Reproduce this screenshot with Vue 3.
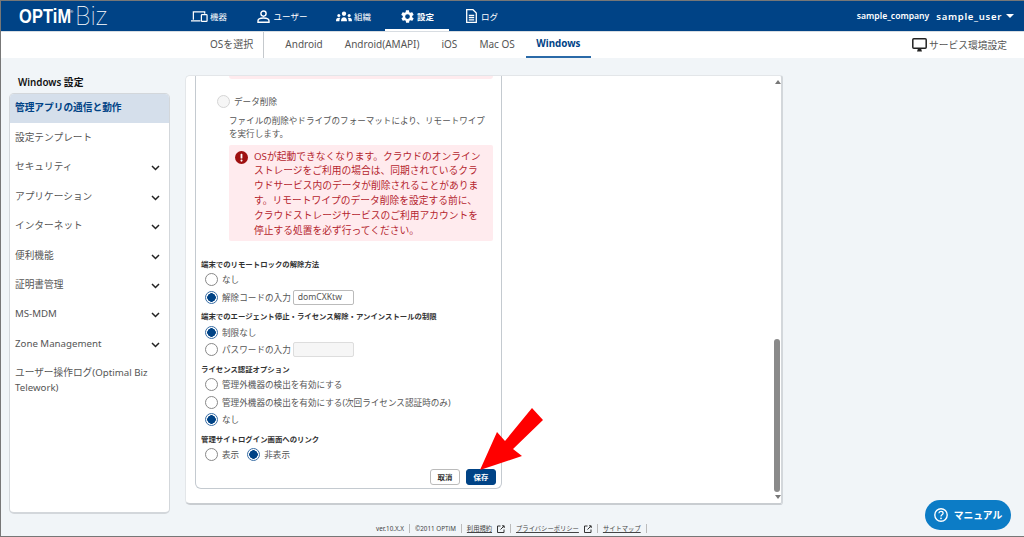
<script setup>
const menus = [
  { label: '設定テンプレート', more: false },
  { label: 'セキュリティ', more: true },
  { label: 'アプリケーション', more: true },
  { label: 'インターネット', more: true },
  { label: '便利機能', more: true },
  { label: '証明書管理', more: true },
  { label: 'MS-MDM', more: true },
  { label: 'Zone Management', more: true }
]
const tabs = ['Android', 'Android(AMAPI)', 'iOS', 'Mac OS', 'Windows']
</script>

<template>
  <div class="page">
    <header class="topbar">
      <div class="logo"><span class="optim">OPTiM</span><sup>®</sup><span class="biz">Biz</span></div>
      <nav class="mainnav">
        <a class="navitem">
          <svg width="17" height="13" viewBox="0 0 18 13" fill="none" stroke="#fff" stroke-width="1.3"><path d="M2.5 10V1.5h12v2M0 11.2h10"/><rect x="11" y="4.5" width="6" height="7.2" rx=".8"/></svg>
          <span>機器</span>
        </a>
        <a class="navitem wide">
          <svg width="13" height="13" viewBox="0 0 13 13" fill="none" stroke="#fff" stroke-width="1.4"><circle cx="6.5" cy="3.6" r="2.6"/><path d="M1 12.2v-1.4C1 9 3 8 6.5 8s5.500 1 5.500 2.800v1.400z"/></svg>
          <span>ユーザー</span>
        </a>
        <a class="navitem">
          <svg width="16" height="11" viewBox="0 0 17 11" fill="#fff"><circle cx="8.500" cy="2.600" r="2.300"/><circle cx="3" cy="4.500" r="1.600"/><circle cx="14" cy="4.500" r="1.600"/><path d="M5.300 10.500c0-3 1.300-4.300 3.200-4.300s3.200 1.300 3.200 4.300zM0 10.500c0-2.500 1-3.600 3-3.600.6 0 1 .1 1.400.3-.5.800-.8 1.900-.8 3.300zM17 10.500c0-2.500-1-3.600-3-3.600-.6 0-1 .1-1.400.3.500.8.800 1.900.8 3.300z"/></svg>
          <span>組織</span>
        </a>
        <a class="navitem active">
          <svg width="15" height="15" viewBox="0 0 24 24" fill="#fff"><path d="M19.400 13c.1-.3.100-.7.100-1s0-.7-.1-1l2.100-1.600c.2-.2.300-.4.100-.6l-2-3.500c-.1-.2-.4-.3-.6-.2l-2.500 1c-.5-.4-1.100-.7-1.700-1l-.4-2.600c0-.3-.2-.4-.5-.4h-4c-.3 0-.5.100-.5.400l-.4 2.600c-.6.300-1.200.6-1.700 1l-2.500-1c-.2-.1-.5 0-.6.200l-2 3.500c-.1.200-.1.400.1.600L4.600 11c-.1.300-.1.700-.1 1s0 .7.100 1l-2.100 1.600c-.2.200-.3.400-.1.600l2 3.500c.1.200.4.300.6.200l2.500-1c.5.400 1.100.7 1.700 1l.4 2.600c0 .3.200.4.500.4h4c.3 0 .5-.1.500-.4l.4-2.600c.6-.3 1.200-.6 1.700-1l2.500 1c.2.100.5 0 .6-.2l2-3.500c.1-.2.100-.4-.1-.6zM12 15.800a3.800 3.800 0 1 1 0-7.600 3.800 3.800 0 0 1 0 7.600z"/></svg>
          <span>設定</span>
        </a>
        <a class="navitem wide">
          <svg width="11" height="14" viewBox="0 0 11 14" fill="none" stroke="#fff" stroke-width="1.300"><path d="M.7.700h6.300l3.300 3.300v9.300H.7z"/><path d="M2.800 6.500h5.400M2.800 8.700h5.400M2.800 10.900h5.400"/></svg>
          <span>ログ</span>
        </a>
      </nav>
      <div class="account">
        <span class="company">sample_company</span>
        <span class="user">sample_user</span>
        <i class="caret"></i>
      </div>
    </header>

    <div class="subbar">
      <div class="oslabel">OSを選択</div>
      <div class="ostabs">
        <a v-for="t in tabs" :key="t" class="ostab" :class="{ on: t === 'Windows' }">{{ t }}</a>
      </div>
      <div class="service">
        <svg width="15" height="14" viewBox="0 0 15 14" fill="none"><rect x=".8" y=".8" width="13.400" height="9.400" rx="1" stroke="#222" stroke-width="1.500"/><path d="M5 13.500h5L9 10.500H6z" fill="#222"/></svg>
        サービス環境設定
      </div>
    </div>

    <div class="content">
      <aside class="side">
        <div class="sidetitle">Windows 設定</div>
        <div class="sidecard">
          <div class="sideitem current">管理アプリの通信と動作</div>
          <div v-for="m in menus" :key="m.label" class="sideitem">
            {{ m.label }}
            <svg v-if="m.more" class="chev" width="9" height="6" viewBox="0 0 9 6" fill="none" stroke="#222" stroke-width="1.500"><path d="M1 1l3.500 3.500L8 1"/></svg>
          </div>
          <div class="sideitem long">ユーザー操作ログ(Optimal Biz Telework)</div>
        </div>
      </aside>

      <main class="panel">
        <section class="box">
          <div class="pinktail"></div>
          <label class="radio wipe"><i class="dot off"></i>データ削除</label>
          <p class="desc">ファイルの削除やドライブのフォーマットにより、リモートワイプを実行します。</p>
          <div class="alert">
            <svg class="alerticon" width="13" height="13" viewBox="0 0 13 13"><circle cx="6.500" cy="6.500" r="6.500" fill="#9e1010"/><rect x="5.600" y="2.800" width="1.800" height="4.800" rx=".6" fill="#fff"/><circle cx="6.500" cy="9.600" r="1.050" fill="#fff"/></svg>
            <div>OSが起動できなくなります。クラウドのオンラインストレージをご利用の場合は、同期されているクラウドサービス内のデータが削除されることがあります。リモートワイプのデータ削除を設定する前に、クラウドストレージサービスのご利用アカウントを停止する処置を必ず行ってください。</div>
          </div>

          <h4 class="head first">端末でのリモートロックの解除方法</h4>
          <label class="radio"><i class="dot"></i>なし</label>
          <label class="radio"><i class="dot sel"></i>解除コードの入力<input class="code" value="domCXKtw" /></label>

          <h4 class="head">端末でのエージェント停止・ライセンス解除・アンインストールの制限</h4>
          <label class="radio"><i class="dot sel"></i>制限なし</label>
          <label class="radio"><i class="dot"></i>パスワードの入力<input class="code empty" /></label>

          <h4 class="head">ライセンス認証オプション</h4>
          <label class="radio"><i class="dot"></i>管理外機器の検出を有効にする</label>
          <label class="radio"><i class="dot"></i>管理外機器の検出を有効にする(次回ライセンス認証時のみ)</label>
          <label class="radio"><i class="dot sel"></i>なし</label>

          <h4 class="head">管理サイトログイン画面へのリンク</h4>
          <div class="inline">
            <label class="radio"><i class="dot"></i>表示</label>
            <label class="radio"><i class="dot sel"></i>非表示</label>
          </div>

          <div class="actions">
            <button class="btn">取消</button>
            <button class="btn primary">保存</button>
          </div>
        </section>

        <div class="scroll">
          <i class="up"></i>
          <i class="thumb"></i>
          <i class="down"></i>
        </div>
      </main>
    </div>

    <footer class="foot">
      <span>ver.10.X.X</span>
      <span>©2011 OPTiM</span>
      <span><u>利用規約</u><svg class="ext" width="8" height="8" viewBox="0 0 8 8" fill="none" stroke="#333"><path d="M3.500 1H.5v6.500H7V4.500M3.500 4.500L7 1M5 .8h2.200V3"/></svg></span>
      <span><u>プライバシーポリシー</u><svg class="ext" width="8" height="8" viewBox="0 0 8 8" fill="none" stroke="#333"><path d="M3.500 1H.5v6.500H7V4.500M3.500 4.500L7 1M5 .8h2.200V3"/></svg></span>
      <span><u>サイトマップ</u></span>
    </footer>

    <a class="manual">
      <svg width="14" height="14" viewBox="0 0 14 14" fill="none"><circle cx="7" cy="7" r="6.200" stroke="#fff" stroke-width="1.400"/><path d="M4.900 5.300C5 4 5.900 3.400 7 3.400c1.200 0 2.100.7 2.100 1.800 0 1.600-2.100 1.500-2.100 3.200" stroke="#fff" stroke-width="1.300"/><circle cx="7" cy="10.300" r=".9" fill="#fff"/></svg>
      マニュアル
    </a>

    <svg class="arrow" width="70" height="70" viewBox="475 405 70 70"><polygon points="480,470 497,432 505,441 532,408 543,420 513,449 522,456" fill="#ff0000"/></svg>
  </div>
</template>

<style>
html, body { margin: 0; padding: 0; }
</style>

<style scoped>
.page {
  position: relative;
  box-sizing: border-box;
  width: 1024px;
  height: 537px;
  overflow: hidden;
  display: flex;
  flex-direction: column;
  background: #f1f5f8;
  border: 1px solid #777;
  border-right: 0;
  font-family: "Noto Sans", "Noto Sans CJK JP", sans-serif;
  color: #555;
}
.topbar {
  flex: 0 0 30px;
  display: flex;
  align-items: center;
  background: #004386;
  color: #fff;
}
.logo {
  width: 175px;
  padding-left: 18px;
  box-sizing: border-box;
  display: flex;
  align-items: center;
  white-space: nowrap;
}
.optim {
  width: 50px;
  font-family: "Liberation Sans", sans-serif;
  font-weight: 700;
  font-size: 21px;
  letter-spacing: .2px;
  transform: scaleX(.78);
  transform-origin: left center;
}
sup { font-size: 4px; margin: -10px 0 0 1px; }
.biz {
  font-family: Roboto, sans-serif;
  font-weight: 100;
  font-size: 25px;
  margin-left: 2px;
}
.mainnav {
  display: grid;
  grid-template-columns: 66px 80px 63px 64px 66px;
  height: 100%;
}
.navitem {
  display: flex;
  align-items: center;
  justify-content: center;
  gap: 2px;
  font-size: 8.500px;
  position: relative;
}
.navitem.wide { gap: 4px; }
.navitem.active { font-weight: 700; }
.navitem.active::after {
  content: "";
  position: absolute;
  left: 0;
  right: 0;
  bottom: 0;
  height: 2px;
  background: #fff;
}
.account {
  margin-left: auto;
  margin-right: 10px;
  display: flex;
  align-items: center;
  font-weight: 600;
}
.company { font-size: 8.600px; margin-right: 7px; }
.user { font-size: 9.500px; letter-spacing: .7px; }
.caret {
  margin-left: 4px;
  border: 4px solid transparent;
  border-top: 4px solid #fff;
  border-bottom: 0;
}
.subbar {
  flex: 0 0 26px;
  display: flex;
  align-items: stretch;
  background: #fff;
  border-top: 1px solid #d8dde2;
  box-sizing: border-box;
  font-size: 10px;
}
.oslabel {
  margin-left: 209px;
  padding-right: 10px;
  border-right: 1px solid #c5c9cd;
  line-height: 24px;
}
.ostabs { display: flex; margin-left: 10px; }
.ostab {
  padding: 0 11px;
  line-height: 24px;
  border-bottom: 2px solid transparent;
}
.ostab.on {
  color: #004386;
  font-weight: 700;
  font-size: 9.800px;
  padding: 0 10.500px;
  border-bottom-color: #2a6aa8;
}
.service {
  margin-left: auto;
  margin-right: 17px;
  display: flex;
  align-items: center;
  gap: 2px;
  font-size: 9.750px;
}
.content {
  flex: 0 0 459px;
  display: flex;
  align-items: flex-start;
}
.side { width: 161px; margin-left: 8px; }
.sidetitle {
  margin: 18px 0 3px 9px;
  height: 14px;
  font-size: 9.800px;
  line-height: 14px;
  font-weight: 600;
  color: #111;
}
.sidecard {
  box-sizing: border-box;
  height: 421px;
  background: #fff;
  border: 1px solid #d3d7db;
  border-bottom-width: 2px;
  border-radius: 5px;
  overflow: hidden;
}
.sideitem {
  position: relative;
  height: 29.400px;
  line-height: 29.400px;
  padding-left: 5px;
  font-size: 9.700px;
}
.sideitem.current {
  height: 29px;
  line-height: 27px;
  background: #d5dfeb;
  color: #004386;
  font-weight: 700;
}
.sideitem.long {
  height: auto;
  line-height: 15px;
  padding: 7px 10px 0 5px;
}
.chev { position: absolute; right: 9px; top: 13px; }
.panel {
  position: relative;
  box-sizing: border-box;
  width: 598px;
  height: 430px;
  margin: 17px 0 0 15px;
  padding-left: 9px;
  background: #fff;
  border: 1px solid #e3e6e9;
  border-right: 2px solid #d3d7db;
  border-bottom: 2px solid #c9cdd1;
  border-radius: 5px 3px 3px 5px;
  overflow: hidden;
}
.box {
  box-sizing: border-box;
  width: 307px;
  height: 413px;
  padding-left: 5px;
  border: 1px solid #c4cad0;
  border-top: 0;
  border-radius: 0 0 6px 6px;
}
.pinktail {
  height: 3px;
  margin: 0 8px 0 28px;
  background: #ffebee;
  border-radius: 0 0 3px 3px;
}
.radio {
  display: flex;
  align-items: center;
  height: 17.500px;
  font-size: 8.600px;
  white-space: nowrap;
}
.dot {
  box-sizing: border-box;
  flex: none;
  width: 13px;
  height: 13px;
  margin-right: 4px;
  border-radius: 50%;
  border: 1px solid #888;
  background: #fff;
}
.dot.off { border-color: #d5d5d5; background: #f6f6f6; }
.dot.sel {
  border-color: #3a6ea5;
  background: radial-gradient(circle, #004386 0 4px, #fff 4.500px);
}
.wipe { margin: 14px 0 0 16px; }
.desc {
  margin: 4px 12px 0 28px;
  font-size: 8.550px;
  line-height: 13.500px;
}
.alert {
  display: flex;
  gap: 6px;
  box-sizing: border-box;
  height: 96px;
  margin: 3px 8px 0 28px;
  padding: 5px 9px 0 6px;
  background: #ffebee;
  border-radius: 2px;
  color: #b5262e;
  font-size: 9.750px;
  line-height: 14.900px;
}
.alerticon { flex: none; margin-top: 1px; }
.head {
  margin: 4px 0 0 0;
  height: 13.500px;
  font-size: 7.400px;
  line-height: 12px;
  font-weight: 700;
  color: #333;
  white-space: nowrap;
}
.head.first { margin-top: 17px; }
.radio:not(.wipe) { margin-left: 4px; }
.code {
  box-sizing: border-box;
  width: 61px;
  height: 15px;
  margin-left: 2px;
  padding: 0 4px;
  border: 1px solid #bbb;
  border-radius: 2px;
  font: inherit;
  color: #555;
  background: #fff;
}
.code.empty { background: #f6f6f6; border-color: #ddd; }
.inline { display: flex; gap: 4px; }
.actions {
  display: flex;
  justify-content: flex-end;
  gap: 6px;
  margin: 5px 5px 0 0;
}
.btn {
  box-sizing: border-box;
  width: 30px;
  height: 16px;
  padding: 0;
  border: 1px solid #bbb;
  border-radius: 3px;
  background: #fff;
  font-family: inherit;
  font-size: 7.400px;
  font-weight: 700;
  color: #333;
}
.btn.primary { background: #004386; border-color: #004386; color: #fff; }
.scroll {
  position: absolute;
  top: 0;
  right: 0;
  bottom: 0;
  width: 8px;
  display: block;
}
.up, .down {
  position: absolute;
  left: 2px;
  border: 3px solid transparent;
}
.up { top: 4px; border-top: 0; border-bottom: 4px solid #777; }
.down { bottom: 4px; border-bottom: 0; border-top: 4px solid #777; }
.thumb {
  position: absolute;
  left: 1px;
  top: 263px;
  width: 6px;
  height: 153px;
  background: #8a8a8a;
  border-radius: 3px;
}
.foot {
  display: flex;
  align-items: center;
  margin: 7px 0 0 375px;
  font-size: 6.300px;
  color: #444;
  white-space: nowrap;
}
.foot span {
  display: flex;
  align-items: center;
  padding: 0 5px;
  border-right: 1px solid #bbb;
  line-height: 9px;
}
.foot span:first-child { padding-left: 0; }
.ext { margin-left: 5px; }
.manual {
  position: absolute;
  left: 924px;
  top: 499px;
  width: 86px;
  height: 30px;
  display: flex;
  align-items: center;
  justify-content: center;
  gap: 6px;
  background: #0c7cc6;
  border-radius: 15px;
  color: #fff;
  font-size: 9.800px;
  font-weight: 700;
}
.arrow {
  position: absolute;
  left: 474px;
  top: 404px;
}
</style>
